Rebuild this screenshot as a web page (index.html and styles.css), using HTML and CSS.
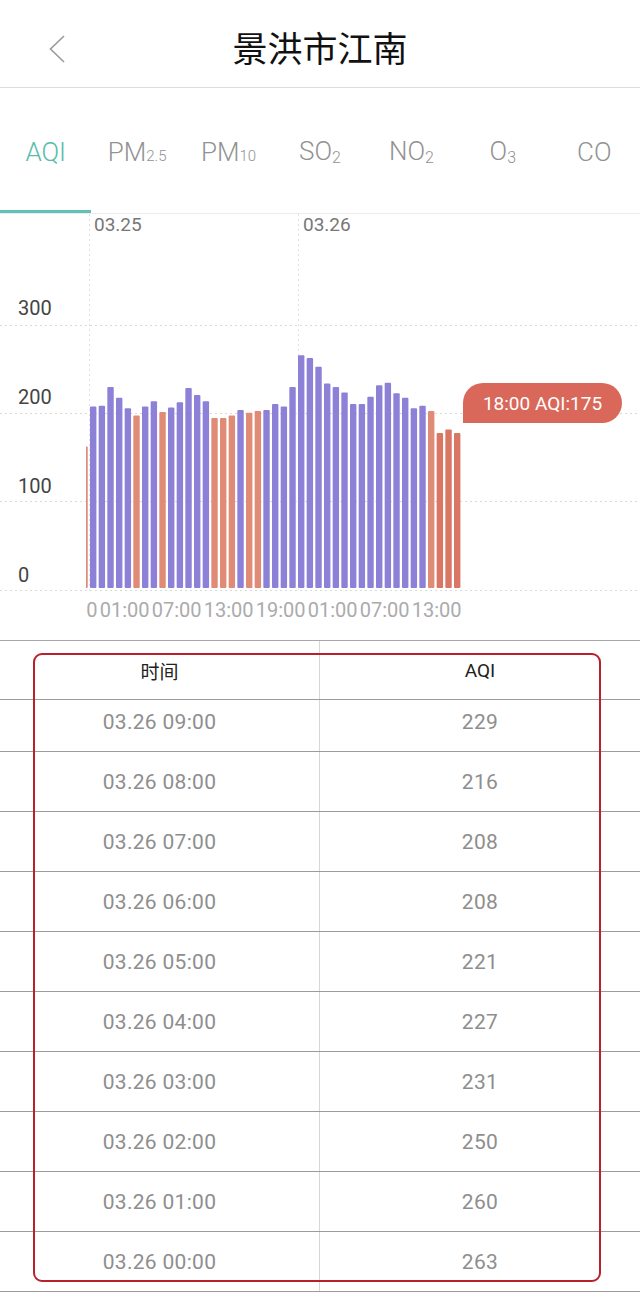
FILE: index.html
```html
<!DOCTYPE html>
<html>
<head>
  <meta charset="utf-8">
  <title>景洪市江南</title>
  <link rel="stylesheet" href="styles.css">
</head>
<body>
  <div class="topbar">
    <a href="#" class="back">
      <svg width="16" height="28" viewBox="0 0 16 28"><path d="M15 1 L1.5 14 L15 27" fill="none" stroke="#9a9a9a" stroke-width="1.6"/></svg>
    </a>
    <h1 class="title">景洪市江南</h1>
    <span></span>
  </div>

  <div class="tabs">
    <div class="tab active"><span>AQI</span></div>
    <div class="tab"><span>PM<span class="num">2.5</span></span></div>
    <div class="tab"><span>PM<span class="num">10</span></span></div>
    <div class="tab"><span>SO<span class="sub">2</span></span></div>
    <div class="tab"><span>NO<span class="sub">2</span></span></div>
    <div class="tab"><span>O<span class="sub">3</span></span></div>
    <div class="tab"><span>CO</span></div>
  </div>

  <div class="chart">
    <svg id="chart" width="640" height="426" viewBox="0 0 640 426"></svg>
  </div>

  <div class="table">
    <div class="row head">
      <div class="cell cn">时间</div>
      <div class="cell">AQI</div>
    </div>
    <div id="rows"></div>
    <div class="mark"></div>
  </div>

  <script>
    const day25 = [205, 206, 227, 215, 203, 195, 205, 211, 199, 204, 210, 226,
                   218, 211, 192, 192, 195, 201, 198, 200, 201, 208, 205, 227];
    const day26 = [263, 260, 250, 231, 227, 221, 208, 208, 216, 229, 232, 220,
                   215, 203, 206, 200, 175, 179, 175];
    // first value is 03.24 23:00, only partly visible
    const values = [160].concat(day25, day26);

    const NS = "http://www.w3.org/2000/svg";
    const svg = document.getElementById("chart");
    const pitch = 26 / 3;

    function el(name, attrs, text) {
      const node = document.createElementNS(NS, name);
      for (const k in attrs) node.setAttribute(k, attrs[k]);
      if (text) node.textContent = text;
      return node;
    }

    const defs = el("defs", {});
    const clip = el("clipPath", { id: "plot" });
    clip.appendChild(el("rect", { x: 86, y: 0, width: 376, height: 426 }));
    defs.appendChild(clip);
    svg.appendChild(defs);

    [111.5, 199.5, 287.5, 376.5].forEach(y => {
      svg.appendChild(el("line", { x1: 0, x2: 640, y1: y, y2: y, class: "grid" }));
    });
    [89.5, 298.5].forEach(x => {
      svg.appendChild(el("line", { x1: x, x2: x, y1: 0, y2: 376, class: "day-line" }));
    });

    svg.appendChild(el("text", { x: 94, y: 17, class: "date" }, "03.25"));
    svg.appendChild(el("text", { x: 303, y: 17, class: "date" }, "03.26"));

    [["300", 101], ["200", 190], ["100", 279], ["0", 368]].forEach(([t, y]) => {
      svg.appendChild(el("text", { x: 18, y: y, class: "axis" }, t));
    });

    const plot = el("g", { "clip-path": "url(#plot)" });
    values.forEach((v, k) => {
      const x = 90 + (k - 1) * pitch;
      const h = v * 0.885;
      let cls = v > 200 ? "bar bad" : "bar";
      if (k >= values.length - 3) cls += " last";
      plot.appendChild(el("rect", { x: x.toFixed(2), y: (374 - h).toFixed(1), width: 6.4, height: h.toFixed(1), rx: 1, class: cls }));
    });

    ["19:00", "01:00", "07:00", "13:00", "19:00", "01:00", "07:00", "13:00"].forEach((t, k) => {
      const x = 90 + (6 * (k - 1) + 1) * pitch + 1;
      plot.appendChild(el("text", { x: x.toFixed(1), y: 403, class: "tick" }, t));
    });
    svg.appendChild(plot);

    svg.appendChild(el("path", { d: "M463 209 V189 A20 20 0 0 1 483 169 H602 A20 20 0 0 1 602 209 Z", class: "tip" }));
    svg.appendChild(el("text", { x: 542.5, y: 196, class: "tip-text" }, "18:00 AQI:175"));

    const rows = document.getElementById("rows");
    for (let h = 9; h >= 0; h--) {
      const row = document.createElement("div");
      row.className = h === 9 ? "row first" : "row";
      row.innerHTML = `<div class="cell">03.26 0${h}:00</div><div class="cell">${day26[h]}</div>`;
      rows.appendChild(row);
    }
  </script>
</body>
</html>
```

FILE: styles.css
```css
* {
  box-sizing: border-box;
}
body {
  margin: 0;
  width: 640px;
  background: #fff;
  font-family: Roboto, "Noto Sans CJK SC", sans-serif;
}
.topbar {
  display: grid;
  grid-template-columns: 1fr auto 1fr;
  align-items: center;
  height: 88px;
  padding-top: 5px;
  border-bottom: 1px solid #dcdcdc;
}
.back {
  display: flex;
  padding-left: 49px;
  margin-top: 5px;
}
.title {
  margin: 0;
  font-family: "Noto Sans CJK SC", sans-serif;
  font-size: 35px;
  font-weight: 400;
  color: #111;
}
.tabs {
  display: grid;
  grid-template-columns: repeat(7, 1fr);
  border-bottom: 1px solid #ececec;
}
.tab {
  height: 125px;
  padding-top: 5px;
  display: flex;
  align-items: center;
  justify-content: center;
  border-bottom: 3px solid transparent;
  font-size: 26px;
  font-weight: 300;
  color: #929292;
}
.tab.active {
  color: #58bca8;
  border-bottom-color: #62c0b9;
}
.tab .num {
  font-size: 15px;
}
.tab .sub {
  font-size: 16px;
  vertical-align: -3px;
}
.chart {
  height: 426px;
}
.chart svg {
  display: block;
}
.grid {
  stroke: #dadada;
  stroke-width: 1;
  stroke-dasharray: 2 3;
}
.day-line {
  stroke: #e3dbef;
  stroke-width: 1;
  stroke-dasharray: 2 3;
}
.date {
  font-family: Roboto, sans-serif;
  font-size: 19px;
  fill: #777;
}
.axis {
  font-family: Roboto, sans-serif;
  font-size: 20px;
  fill: #444;
}
.tick {
  font-family: Roboto, sans-serif;
  font-size: 20px;
  fill: #ababab;
}
.bar {
  fill: #e08b75;
}
.bar.bad {
  fill: #8c80d7;
}
.bar.last {
  fill: #da7664;
}
.tip {
  fill: #d9685a;
}
.tip-text {
  font-family: Roboto, sans-serif;
  font-size: 19px;
  fill: #fff;
  text-anchor: middle;
}
.table {
  position: relative;
  border-top: 1px solid #a8a8a8;
}
.row {
  display: grid;
  grid-template-columns: 1fr 1fr;
  height: 60px;
  border-bottom: 1px solid #9c9c9c;
  font-size: 21px;
  letter-spacing: 0.3px;
  color: #8e8e8e;
}
.row.head {
  height: 59px;
  font-size: 19px;
  letter-spacing: 0;
  color: #222;
}
.row.first {
  height: 52px;
}
.row.first .cell {
  padding-bottom: 7px;
}
.cell {
  display: flex;
  align-items: center;
  justify-content: center;
}
.cell:first-child {
  border-right: 1px solid #d6d6d6;
}
.cn {
  font-family: "Noto Sans CJK SC", sans-serif;
}
.mark {
  position: absolute;
  left: 33px;
  top: 12px;
  width: 568px;
  height: 629px;
  border: 2px solid #b8202a;
  border-radius: 9px;
}
```
